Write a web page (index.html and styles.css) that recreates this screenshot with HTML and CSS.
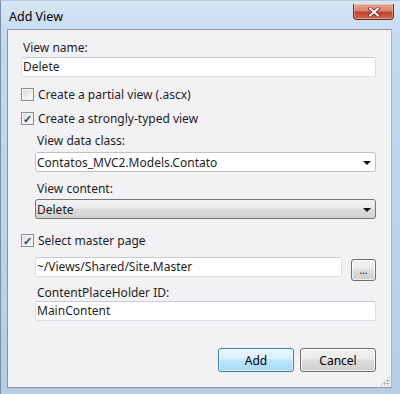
FILE: index.html
```html
<!DOCTYPE html>
<html lang="en">
<head>
    <meta charset="UTF-8">
    <title>Add View</title>
    <link rel="stylesheet" href="styles.css">
</head>
<body>
    <div class="window">
        <div class="titlebar">
            <span class="title">Add View</span>
            <div class="close-btn">
                <svg width="14" height="10" viewBox="0 0 14 10">
                    <path d="M3 1.5 L11 8.5 M11 1.5 L3 8.5" stroke="#5a1a12" stroke-width="3.4" stroke-linecap="square"/>
                    <path d="M3 1.5 L11 8.5 M11 1.5 L3 8.5" stroke="#ffffff" stroke-width="2" stroke-linecap="square"/>
                </svg>
            </div>
        </div>

        <div class="client">
            <div class="label">View name:</div>
            <div class="textbox first">Delete</div>

            <div class="check-row cb-partial">
                <span class="checkbox"></span>
                <span>Create a partial view (.ascx)</span>
            </div>
            <div class="check-row cb-typed">
                <span class="checkbox checked">&#10003;</span>
                <span>Create a strongly-typed view</span>
            </div>

            <div class="indent">
                <div class="label lbl-class">View data class:</div>
                <div class="select">
                    <span>Contatos_MVC2.Models.Contato</span>
                    <span class="arrow"></span>
                </div>
                <div class="label lbl-content">View content:</div>
                <div class="select combo">
                    <span>Delete</span>
                    <span class="arrow"></span>
                </div>
            </div>

            <div class="check-row cb-master">
                <span class="checkbox checked">&#10003;</span>
                <span>Select master page</span>
            </div>

            <div class="indent">
                <div class="master-row">
                    <div class="textbox grow">~/Views/Shared/Site.Master</div>
                    <div class="btn browse">...</div>
                </div>
                <div class="label lbl-holder">ContentPlaceHolder ID:</div>
                <div class="textbox">MainContent</div>
            </div>

            <div class="footer">
                <div class="btn btn-default">Add</div>
                <div class="btn btn-cancel">Cancel</div>
            </div>
            <div class="grip"></div>
        </div>
    </div>
</body>
</html>
```

FILE: styles.css
```css
* {
    margin: 0;
    padding: 0;
    box-sizing: border-box;
}

body {
    font-family: "Noto Sans", "Open Sans", sans-serif;
    font-size: 12px;
    color: #1e1e1e;
    background: #2a3746;
}

.window {
    width: 400px;
    height: 394px;
    background: linear-gradient(180deg, #d6e6f6 0%, #c3d9ef 10%, #bcd3ec 60%, #b6cde6 100%);
    border-left: 1px solid #7a8ea4;
    border-top: 1px solid #b9c9da;
    padding: 0 7px 0 6px;
    display: flex;
    flex-direction: column;
}

.titlebar {
    height: 28px;
    display: flex;
    align-items: flex-start;
    justify-content: space-between;
    padding-left: 2px;
}

.title {
    margin-top: 7px;
    font-size: 12.5px;
    color: #000;
}

.close-btn {
    width: 41px;
    height: 16px;
    margin-top: 3px;
    margin-right: -1px;
    border: 1px solid #6d2a20;
    border-top: none;
    border-radius: 0 0 4px 4px;
    background: linear-gradient(180deg, #e8a592 0%, #d7826e 45%, #c0412c 55%, #cf6a4f 100%);
    display: flex;
    align-items: center;
    justify-content: center;
    box-shadow: inset 0 0 0 1px rgba(255, 220, 200, 0.45);
}

.client {
    position: relative;
    width: 385px;
    height: 359px;
    border: 1px solid #8895a4;
    border-right-color: #a8b8c8;
    background: #f2f1f4;
    padding: 10px 15px 0 13px;
}

.label {
    line-height: 16px;
    padding-left: 2px;
}

.textbox {
    height: 20px;
    background: #fff;
    border: 1px solid #dcdee4;
    border-top-color: #c9ccd4;
    border-radius: 2px;
    line-height: 18px;
    padding-left: 1px;
}

.textbox.first {
    margin-top: 1px;
}

.check-row {
    height: 16px;
    display: flex;
    align-items: center;
    gap: 4px;
}

.cb-partial { margin-top: 9px; }
.cb-typed { margin-top: 8px; }
.cb-master { margin-top: 13px; }

.checkbox {
    width: 13px;
    height: 13px;
    border: 1px solid #8f8f8f;
    background: linear-gradient(135deg, #dcdcdc, #fbfbfb);
    box-shadow: inset 0 0 0 1px #f4f4f4;
    font-size: 11px;
    line-height: 11px;
    color: #2a3f7a;
    text-align: center;
    font-weight: bold;
}

.indent {
    margin-left: 14px;
}

.lbl-class { margin-top: 7px; }
.lbl-content { margin-top: 9px; }
.lbl-holder { margin-top: 4px; }

.select {
    height: 20px;
    margin-top: 3px;
    background: #fff;
    border: 1px solid #c2c2c6;
    border-radius: 3px;
    display: flex;
    align-items: center;
    justify-content: space-between;
    padding: 0 4px 0 1px;
}

.select.combo {
    margin-top: 2px;
    border-color: #76777a;
    background: linear-gradient(180deg, #f3f3f3 0%, #ebebeb 45%, #dcdcdc 50%, #d2d2d2 100%);
}

.arrow {
    width: 0;
    height: 0;
    border-left: 4px solid transparent;
    border-right: 4px solid transparent;
    border-top: 4px solid #111;
    margin-top: 2px;
}

.master-row {
    margin-top: 9px;
    display: flex;
    align-items: flex-start;
    gap: 9px;
    height: 24px;
}

.grow {
    flex: 1;
}

.btn {
    display: flex;
    align-items: center;
    justify-content: center;
    border: 1px solid #707070;
    border-radius: 3px;
    background: linear-gradient(180deg, #f2f2f2 0%, #ebebeb 45%, #dddddd 50%, #cfcfcf 100%);
    box-shadow: inset 0 0 0 1px rgba(255, 255, 255, 0.7);
    color: #000;
}

.browse {
    width: 25px;
    height: 22px;
    margin-top: 2px;
    font-size: 10px;
    line-height: 10px;
}

.footer {
    margin-top: 27px;
    display: flex;
    justify-content: flex-end;
    gap: 6px;
}

.footer .btn {
    width: 76px;
    height: 24px;
}

.btn-default {
    border-color: #3c7fb1;
    background: linear-gradient(180deg, #eaf6fd 0%, #d9f0fc 45%, #bee6fd 50%, #a7d9f5 100%);
    box-shadow: inset 0 0 0 1px rgba(255, 255, 255, 0.6);
}

.grip {
    position: absolute;
    right: 1px;
    bottom: 1px;
    width: 10px;
    height: 10px;
    background: radial-gradient(circle, #a0a0a6 0.8px, transparent 1.2px) 0 0 / 3px 3px;
    clip-path: polygon(100% 0, 100% 100%, 0 100%);
}
```
